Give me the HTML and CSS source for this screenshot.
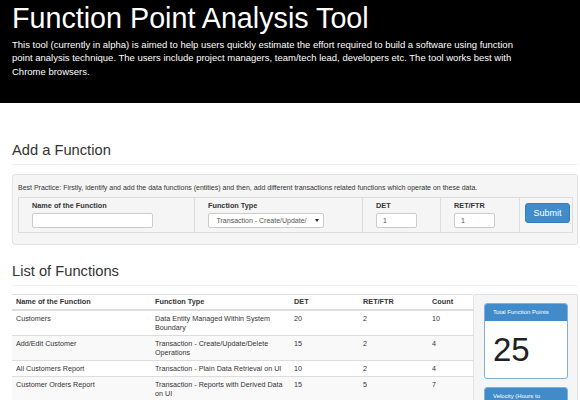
FILE: index.html
```html
<!DOCTYPE html>
<html>
<head>
<meta charset="utf-8">
<link rel="stylesheet" href="styles.css">
</head>
<body>
<header class="hero">
  <h1 class="hero-title">Function Point Analysis Tool</h1>
  <p class="hero-text">This tool (currently in alpha) is aimed to help users quickly estimate the effort required to build a software using function point analysis technique. The users include project managers, team/tech lead, developers etc. The tool works best with Chrome browsers.</p>
</header>

<main class="container">
  <h3 class="section-title">Add a Function</h3>
  <hr class="rule">
  <section class="well form-well">
    <p class="hint">Best Practice: Firstly, identify and add the data functions (entities) and then, add different transactions related functions which operate on these data.</p>
    <div class="form-row">
      <div class="form-cell cell-name">
        <label class="form-label">Name of the Function</label>
        <div class="input input-name"></div>
      </div>
      <div class="form-cell cell-type">
        <label class="form-label">Function Type</label>
        <div class="select"><span class="select-text">Transaction - Create/Update/</span><span class="select-arrow"></span></div>
      </div>
      <div class="form-cell cell-det">
        <label class="form-label">DET</label>
        <div class="input input-small">1</div>
      </div>
      <div class="form-cell cell-ret">
        <label class="form-label">RET/FTR</label>
        <div class="input input-small">1</div>
      </div>
      <div class="form-cell cell-btn">
        <button class="btn-submit">Submit</button>
      </div>
    </div>
  </section>

  <h3 class="section-title list-title">List of Functions</h3>
  <hr class="rule">
  <div class="list-row">
    <table class="fn-table">
      <colgroup>
        <col class="c-name"><col class="c-type"><col class="c-det"><col class="c-ret"><col class="c-count">
      </colgroup>
      <thead>
        <tr><th>Name of the Function</th><th>Function Type</th><th>DET</th><th>RET/FTR</th><th>Count</th></tr>
      </thead>
      <tbody>
        <tr><td>Customers</td><td>Data Entity Managed Within System Boundary</td><td>20</td><td>2</td><td>10</td></tr>
        <tr><td>Add/Edit Customer</td><td>Transaction - Create/Update/Delete Operations</td><td>15</td><td>2</td><td>4</td></tr>
        <tr><td>All Customers Report</td><td>Transaction - Plain Data Retrieval on UI</td><td>10</td><td>2</td><td>4</td></tr>
        <tr><td>Customer Orders Report</td><td>Transaction - Reports with Derived Data on UI</td><td>15</td><td>5</td><td>7</td></tr>
      </tbody>
    </table>
    <aside class="well side-well">
      <div class="panel">
        <div class="panel-head">Total Function Points</div>
        <div class="panel-body">25</div>
      </div>
      <div class="panel">
        <div class="panel-head">Velocity (Hours to Complete)</div>
      </div>
    </aside>
  </div>
</main>
</body>
</html>
```
FILE: styles.css
```css
* { box-sizing: border-box; }
html, body { margin: 0; padding: 0; }
body {
  font-family: "Liberation Sans", Arial, sans-serif;
  color: #333;
  background: #fff;
  overflow: hidden;
}

.hero {
  background: #000;
  color: #fff;
  height: 103px;
  padding: 3px 66px 0 12px;
}
.hero-title {
  margin: 0;
  font-size: 28.7px;
  line-height: 31px;
  font-weight: normal;
}
.hero-text {
  margin: 3.5px 0 0;
  font-size: 9.5px;
  line-height: 13.5px;
}

.container {
  padding: 0 2px 0 12px;
}
.section-title {
  margin: 39px 0 0;
  font-size: 14.7px;
  line-height: 16px;
  font-weight: normal;
}
.list-title { margin-top: 18px; }
.rule {
  border: 0;
  border-top: 1px solid #eee;
  margin: 6px 0 8px;
}

.well {
  background: #f5f5f5;
  border: 1px solid #e3e3e3;
  border-radius: 3px;
}
.form-well {
  margin-top: 9px;
  padding: 8px 4px 11px 5px;
}
.hint {
  margin: 0 0 4.5px;
  font-size: 7px;
  line-height: 9px;
}
.form-row {
  display: flex;
  border: 1px solid #ddd;
}
.form-cell {
  padding: 3.5px 0 4px 13px;
  border-left: 1px solid #ddd;
}
.form-cell:first-child { border-left: 0; }
.cell-name { width: 175px; }
.cell-type { width: 168px; }
.cell-det { width: 78px; }
.cell-ret { width: 79px; }
.cell-btn { flex: 1; padding: 4px 0 0 5px; }
.form-label {
  display: block;
  font-size: 7.3px;
  line-height: 9px;
  font-weight: bold;
  margin-bottom: 2.5px;
}
.input {
  height: 15px;
  background: #fff;
  border: 1px solid #ccc;
  border-radius: 2px;
  font-size: 7px;
  line-height: 13px;
  color: #555;
  padding-left: 6px;
}
.input-name { width: 121px; }
.input-small { width: 41px; }
.select {
  width: 116px;
  height: 15px;
  background: #fff;
  border: 1px solid #ccc;
  border-radius: 2px;
  display: flex;
  align-items: center;
  justify-content: space-between;
  padding: 0 4px 0 7.5px;
  font-size: 7px;
  color: #555;
}
.select-arrow {
  width: 0;
  height: 0;
  border-left: 2px solid transparent;
  border-right: 2px solid transparent;
  border-top: 3px solid #222;
}
.btn-submit {
  width: 45px;
  height: 20px;
  background: #428bca;
  border: 1px solid #357ebd;
  border-radius: 3px;
  color: #fff;
  font-family: inherit;
  font-size: 9px;
  padding: 0;
}

.list-row {
  display: flex;
  align-items: flex-start;
}
.fn-table {
  width: 461px;
  flex: none;
  border-collapse: collapse;
  table-layout: fixed;
  font-size: 7.2px;
  line-height: 9px;
  border-top: 1px solid #ddd;
}
.c-name { width: 139px; }
.c-type { width: 139px; }
.c-det { width: 69px; }
.c-ret { width: 69px; }
.c-count { width: 45px; }
.fn-table th {
  text-align: left;
  font-weight: bold;
  font-size: 7.3px;
  padding: 2.5px 4px;
  border-bottom: 2px solid #ddd;
}
.fn-table td {
  padding: 3px 4px;
  vertical-align: top;
  border-top: 1px solid #ddd;
}
.fn-table tbody tr:nth-child(even) td { background: #f9f9f9; }
.fn-table tbody tr:first-child td { border-top: 0; }

.side-well {
  flex: 1;
  height: 120px;
  padding: 8px 9px 0 10px;
  border-radius: 3px 0 0 3px;
}
.panel {
  border: 1px solid #7fb0dc;
  border-radius: 3px;
  background: #fff;
  margin-bottom: 8px;
  overflow: hidden;
}
.panel-head {
  background: #428bca;
  color: #fff;
  font-size: 6px;
  line-height: 8px;
  padding: 4.5px 8px;
}
.panel-body {
  font-size: 33px;
  line-height: 36px;
  padding: 11px 8px 10px;
  color: #222;
}
```
